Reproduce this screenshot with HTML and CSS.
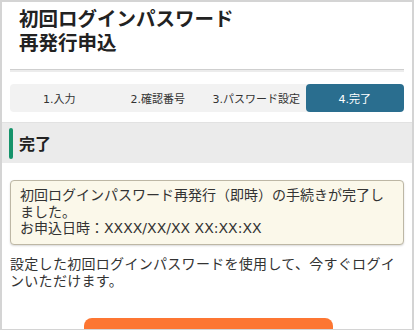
FILE: index.html
```html
<!DOCTYPE html>
<html lang="ja">
<head>
    <meta charset="UTF-8">
    <title>初回ログインパスワード再発行申込</title>
    <link rel="stylesheet" href="styles.css">
</head>
<body>
<div class="page">
    <header class="page-head">
        <h1 class="page-title">初回ログインパスワード<br>再発行申込</h1>
    </header>
    <div class="divider"></div>

    <ol class="steps">
        <li>1.入力</li>
        <li>2.確認番号</li>
        <li>3.パスワード設定</li>
        <li class="current">4.完了</li>
    </ol>

    <h2 class="section-title">完了</h2>

    <div class="content">
        <div class="notice">
            初回ログインパスワード再発行（即時）の手続きが完了しました。<br>
            お申込日時：XXXX/XX/XX XX:XX:XX
        </div>
        <p class="lead">設定した初回ログインパスワードを使用して、今すぐログインいただけます。</p>
        <div class="actions">
            <a class="btn" href="#">ログイン</a>
        </div>
    </div>
</div>
</body>
</html>
```

FILE: styles.css
```css
/* 全体 */
body {
  margin: 0;
  font-family: "DejaVu Sans", "Noto Sans CJK JP", sans-serif;
  color: #333;
  background: #fff;
}

.page {
  height: 330px;
  box-sizing: border-box;
  overflow: hidden;
  border: 2px solid #d4d4d4;
  border-bottom-width: 1px;
}

/* タイトル */
.page-head {
  padding: 6px 17px 0;
}

.page-title {
  margin: 0;
  font-size: 19.5px;
  line-height: 24px;
  font-weight: bold;
  color: #222;
}

.divider {
  margin: 13px 8px 0;
  height: 2px;
  border-top: 1px solid #cfcfcf;
  background: #ececec;
}

/* ステップ */
.steps {
  list-style: none;
  margin: 12px 8px 0;
  padding: 0;
  display: flex;
  height: 28px;
  background: #f2f2f2;
  border-radius: 4px;
}

.steps li {
  flex: 1;
  display: flex;
  align-items: center;
  justify-content: center;
  font-size: 11px;
  color: #333;
}

.steps .current {
  background: #2a6e8f;
  color: #fff;
  border-radius: 4px;
}

/* 見出し */
.section-title {
  margin: 10px 0 0;
  height: 41px;
  display: flex;
  align-items: center;
  padding-left: 17px;
  position: relative;
  background: #ebebeb;
  border-top: 1px solid #e2e2e2;
  box-sizing: border-box;
  font-size: 16px;
  font-weight: bold;
  color: #222;
}

.section-title::before {
  content: "";
  position: absolute;
  left: 7px;
  top: 5px;
  bottom: 4px;
  width: 4px;
  border-radius: 2px;
  background: #16936b;
}

/* 本文 */
.content {
  padding: 17px 8px 0;
}

.notice {
  padding: 6px 9px 7px;
  background: #fbf8ea;
  border: 1px solid #bdb7a5;
  border-radius: 4px;
  box-shadow: 0 1px 2px rgba(0, 0, 0, 0.15);
  font-size: 14px;
  line-height: 16.5px;
  color: #333;
}

.lead {
  margin: 11px 0 0;
  font-size: 14px;
  line-height: 17px;
  letter-spacing: 0.3px;
  color: #333;
}

.actions {
  display: flex;
  justify-content: center;
  margin-top: 28px;
}

.btn {
  display: flex;
  align-items: center;
  justify-content: center;
  width: 249px;
  height: 60px;
  margin-left: 3px;
  background: #fd7632;
  border-radius: 8px;
  color: #fff;
  font-weight: bold;
  text-decoration: none;
}
```
